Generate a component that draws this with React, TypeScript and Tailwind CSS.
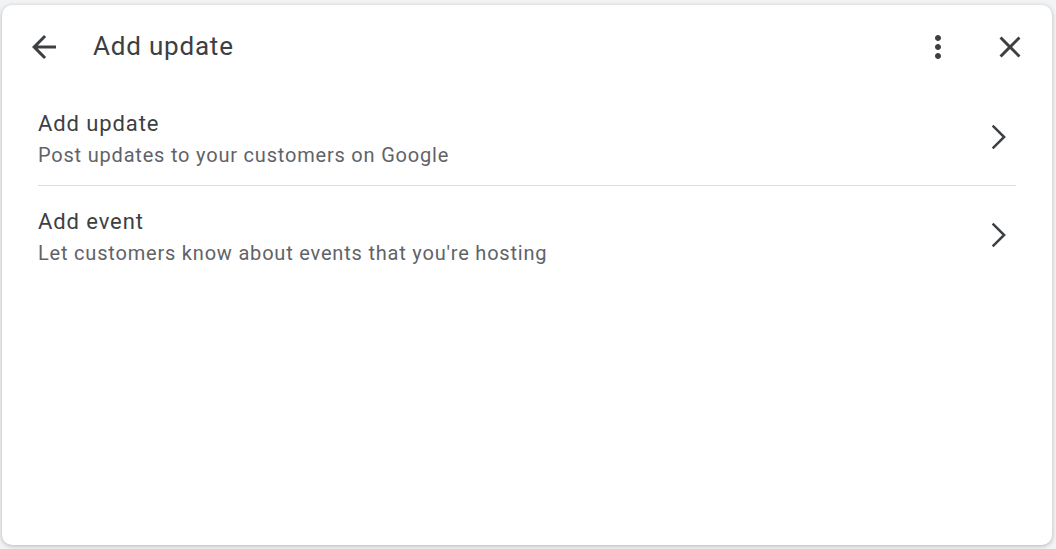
import React from 'react';

const rows = [
  { title: 'Add update', desc: 'Post updates to your customers on Google' },
  { title: 'Add event', desc: "Let customers know about events that you're hosting" },
];

const Chevron = () => (
  <svg viewBox="0 0 24 24" className="w-[46px] h-[46px] text-[#3c4043]" fill="none" stroke="currentColor">
    <polyline points="9.2,6.1 15.2,12 9.2,17.9" strokeWidth="1.3" />
  </svg>
);

export default function App() {
  return (
    <div className="w-[1056px] h-[549px] bg-[#f1f3f4] pt-[5px] pr-[4px] pb-[4px] pl-[2px] font-['Roboto',sans-serif]">
      <div className="h-full bg-white rounded-[10px] shadow-[0_1px_4px_rgba(60,64,67,0.35)] flex flex-col">
        {/* Header */}
        <div className="flex items-center h-[83px] pl-[24px] pr-[24px]">
          <button className="w-[36px] h-[36px] flex items-center justify-center text-[#3c4043]">
            <svg viewBox="0 0 24 24" className="w-[36px] h-[36px]" fill="currentColor">
              <path d="M20 11H7.83l5.59-5.59L12 4l-8 8 8 8 1.41-1.41L7.83 13H20v-2z" />
            </svg>
          </button>
          <h1 className="ml-[31px] text-[26px] tracking-[0.8px] text-[#3c4043] font-normal flex-1">Add update</h1>
          <button className="w-[36px] h-[36px] flex items-center justify-center text-[#3c4043] mr-[36px]">
            <svg viewBox="0 0 24 24" className="w-[36px] h-[36px]" fill="currentColor">
              <path d="M12 8c1.1 0 2-.9 2-2s-.9-2-2-2-2 .9-2 2 .9 2 2 2zm0 2c-1.1 0-2 .9-2 2s.9 2 2 2 2-.9 2-2-.9-2-2-2zm0 6c-1.1 0-2 .9-2 2s.9 2 2 2 2-.9 2-2-.9-2-2-2z" />
            </svg>
          </button>
          <button className="w-[36px] h-[36px] flex items-center justify-center text-[#3c4043]">
            <svg viewBox="0 0 24 24" className="w-[36px] h-[36px]" fill="currentColor">
              <path d="M19 6.41 17.59 5 12 10.59 6.41 5 5 6.41 10.59 12 5 17.59 6.41 19 12 13.41 17.59 19 19 17.59 13.41 12z" />
            </svg>
          </button>
        </div>

        {/* Rows */}
        <div className="px-[36px]">
          {rows.map((row, i) => (
            <div
              key={row.title}
              className={`flex items-start h-[98px] pt-[22px] ${i === 0 ? 'border-b border-[#dadce0]' : ''}`}
            >
              <div className="flex-1">
                <div className="text-[22px] leading-[28px] tracking-[0.9px] text-[#3c4043]">{row.title}</div>
                <div className="text-[20px] leading-[26px] tracking-[0.8px] text-[#5f6368] mt-[4px]">{row.desc}</div>
              </div>
              <div className="mt-[4px] -mr-[5px]">
                <Chevron />
              </div>
            </div>
          ))}
        </div>
      </div>
    </div>
  );
}
